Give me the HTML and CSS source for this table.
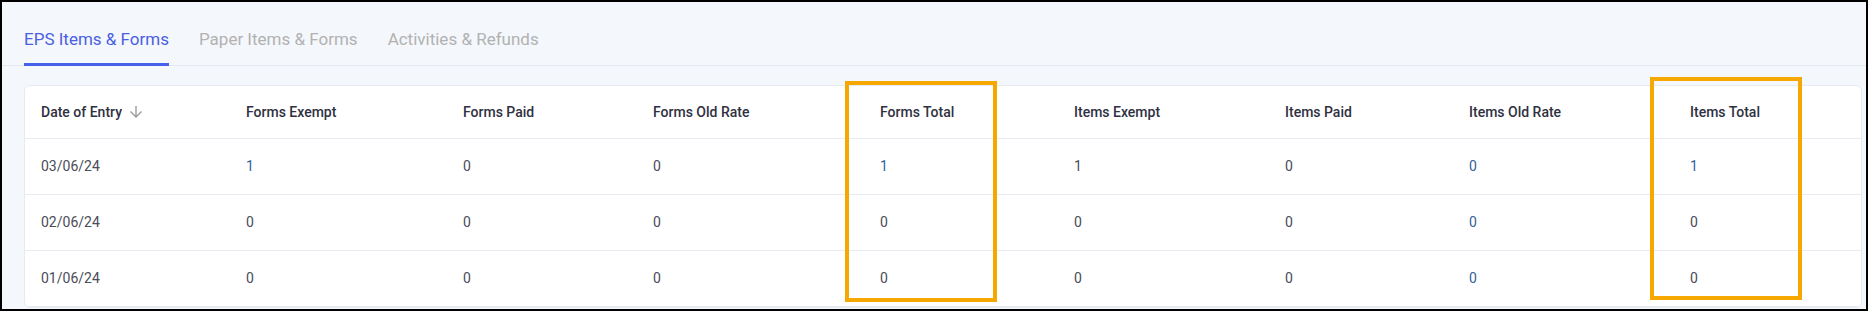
FILE: index.html
```html
<!DOCTYPE html>
<html lang="en">
<head>
<meta charset="utf-8">
<title>EPS Items &amp; Forms</title>
<link rel="stylesheet" href="styles.css">
</head>
<body>
<div class="page">
  <nav class="tabs">
    <a class="tab tab-active">EPS Items &amp; Forms</a>
    <a class="tab">Paper Items &amp; Forms</a>
    <a class="tab">Activities &amp; Refunds</a>
  </nav>
  <div class="card">
    <table class="grid">
      <colgroup>
        <col class="c1"><col class="c2"><col class="c3"><col class="c4"><col class="c5"><col class="c6"><col class="c7"><col class="c8"><col class="c9">
      </colgroup>
      <thead>
        <tr>
          <th><span class="sortable">Date of Entry <svg class="sort-icon" viewBox="0 0 24 24" width="18" height="18"><path d="M20 12l-1.41-1.41L13 16.17V4h-2v12.17l-5.58-5.59L4 12l8 8 8-8z"/></svg></span></th>
          <th>Forms Exempt</th>
          <th>Forms Paid</th>
          <th>Forms Old Rate</th>
          <th>Forms Total</th>
          <th>Items Exempt</th>
          <th>Items Paid</th>
          <th>Items Old Rate</th>
          <th>Items Total</th>
        </tr>
      </thead>
      <tbody>
        <tr>
          <td>03/06/24</td>
          <td class="num link">1</td>
          <td class="num">0</td>
          <td class="num">0</td>
          <td class="num link">1</td>
          <td class="num">1</td>
          <td class="num">0</td>
          <td class="num link">0</td>
          <td class="num link">1</td>
        </tr>
        <tr>
          <td>02/06/24</td>
          <td class="num">0</td>
          <td class="num">0</td>
          <td class="num">0</td>
          <td class="num">0</td>
          <td class="num">0</td>
          <td class="num">0</td>
          <td class="num link">0</td>
          <td class="num">0</td>
        </tr>
        <tr>
          <td>01/06/24</td>
          <td class="num">0</td>
          <td class="num">0</td>
          <td class="num">0</td>
          <td class="num">0</td>
          <td class="num">0</td>
          <td class="num">0</td>
          <td class="num link">0</td>
          <td class="num">0</td>
        </tr>
      </tbody>
    </table>
  </div>
  <div class="highlight hl-forms"></div>
  <div class="highlight hl-items"></div>
</div>
</body>
</html>
```

FILE: styles.css
```css
* { box-sizing: border-box; }

html, body {
  margin: 0;
  padding: 0;
}

body {
  font-family: Roboto, "Liberation Sans", Arial, sans-serif;
  color: #3a3d4a;
}

.page {
  position: relative;
  height: 311px;
  border: 2px solid #000;
  background: #f4f7fb;
  overflow: hidden;
}

.tabs {
  display: flex;
  gap: 30px;
  padding-left: 22px;
  border-bottom: 1px solid #e3e8ef;
}

.tab {
  display: block;
  padding: 27px 0 14px;
  margin-bottom: -1px;
  font-size: 17px;
  line-height: 20px;
  color: #b2b2b2;
  border-bottom: 3px solid transparent;
  text-decoration: none;
  cursor: pointer;
}

.tab-active {
  color: #4b5fe2;
  border-bottom-color: #4662ea;
}

.card {
  margin: 19px 4px 0 22px;
  background: #fff;
  border: 1px solid #e6ebf2;
  border-radius: 6px;
  overflow: hidden;
}

.grid {
  width: 100%;
  table-layout: fixed;
  border-collapse: separate;
  border-spacing: 0;
  font-size: 14px;
  line-height: 20px;
}

.c1 { width: 205px; }
.c2 { width: 217px; }
.c3 { width: 190px; }
.c4 { width: 227px; }
.c5 { width: 194px; }
.c6 { width: 211px; }
.c7 { width: 184px; }
.c8 { width: 221px; }
.c9 { width: 187px; }

.grid th {
  text-align: left;
  font-weight: 500;
  color: #2f3142;
  padding: 16px;
  border-bottom: 1px solid #e7ecf2;
  white-space: nowrap;
}

.grid td {
  padding: 17px 16px 18px 16px;
  color: #4a4c58;
  border-bottom: 1px solid #e7ecf2;
  white-space: nowrap;
}

.grid td.link {
  color: #35609f;
}

.sortable {
  display: inline-flex;
  align-items: center;
  gap: 5px;
}

.sort-icon {
  fill: #a2a2a2;
  display: block;
}

.highlight {
  position: absolute;
  border: 4px solid #f6a800;
  pointer-events: none;
}

.hl-forms {
  left: 843px;
  top: 79px;
  width: 152px;
  height: 221px;
}

.hl-items {
  left: 1648px;
  top: 75px;
  width: 152px;
  height: 223px;
}
```
